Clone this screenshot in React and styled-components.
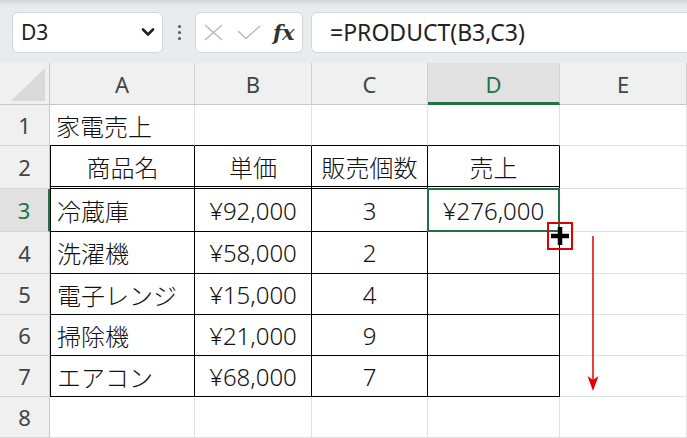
import React from 'react';
import styled, { createGlobalStyle } from 'styled-components';

const GREEN = '#217346';

const GlobalStyle = createGlobalStyle`
  html, body {
    margin: 0;
    padding: 0;
    background: #ffffff;
    overflow: hidden;
  }
  * {
    box-sizing: border-box;
  }
`;

const colWidths = [50, 145, 117, 116, 132, 127];
const rowHeights = [42, 41, 43, 43, 42, 41, 41, 41, 41];
const colNames = ['A', 'B', 'C', 'D', 'E'];

const data = [
  ['家電売上', '', '', '', ''],
  ['商品名', '単価', '販売個数', '売上', ''],
  ['冷蔵庫', '¥92,000', '3', '¥276,000', ''],
  ['洗濯機', '¥58,000', '2', '', ''],
  ['電子レンジ', '¥15,000', '4', '', ''],
  ['掃除機', '¥21,000', '9', '', ''],
  ['エアコン', '¥68,000', '7', '', ''],
  ['', '', '', '', ''],
];

export default function App() {
  return (
    <Page>
      <GlobalStyle />
      <Toolbar>
        <NameBox>
          <NameText>D3</NameText>
          <svg width="14" height="10" viewBox="0 0 14 10">
            <path d="M2 2.5 L7 7.5 L12 2.5" fill="none" stroke="#222" strokeWidth="2.6" strokeLinecap="round" strokeLinejoin="round" />
          </svg>
        </NameBox>
        <Dots>
          <span />
          <span />
          <span />
        </Dots>
        <FxBox>
          <svg width="19" height="17" viewBox="0 0 19 17">
            <path d="M1 1 L18 16 M18 1 L1 16" stroke="#b8b8b8" strokeWidth="1.4" fill="none" />
          </svg>
          <svg width="24" height="15" viewBox="0 0 24 15">
            <path d="M1 6 L9 13.5 L23 1" stroke="#b8b8b8" strokeWidth="1.4" fill="none" />
          </svg>
          <FxLabel>fx</FxLabel>
        </FxBox>
        <FormulaBox>=PRODUCT(B3,C3)</FormulaBox>
      </Toolbar>

      <Sheet>
        <Corner>
          <svg width="36" height="34" viewBox="0 0 36 34">
            <path d="M34 0 L34 33 L0 33 Z" fill="#dadada" />
          </svg>
        </Corner>
        {colNames.map((c) => (
          <ColHeader key={c} $active={c === 'D'}>{c}</ColHeader>
        ))}

        {data.map((row, r) => (
          <React.Fragment key={r}>
            <RowHeader $active={r === 2}>{r + 1}</RowHeader>
            {row.map((val, c) => {
              const inTable = r >= 1 && r <= 6 && c <= 3;
              const aboveTable = r === 0 && c <= 3;
              return (
                <Cell
                  key={c}
                  $align={c === 0 && r !== 1 ? 'flex-start' : 'center'}
                  $boxRight={inTable}
                  $boxLeft={inTable && c === 0}
                  $boxBottom={inTable || aboveTable}
                  $double={r === 1 && c <= 3}
                  $selected={r === 2 && c === 3}
                >
                  {val}
                  {r === 2 && c === 3 && (
                    <FillCursor>
                      <svg width="20" height="20" viewBox="0 0 20 20">
                        <path d="M10 1 V19 M1 10 H19" stroke="#000" strokeWidth="4.5" />
                      </svg>
                    </FillCursor>
                  )}
                </Cell>
              );
            })}
          </React.Fragment>
        ))}

        <Arrow>
          <svg width="14" height="156" viewBox="0 0 14 156">
            <line x1="7" y1="0" x2="7" y2="146" stroke="#e50000" strokeWidth="1.5" />
            <path d="M1.5 140 L7 155 L12.5 140 L7 144 Z" fill="#e50000" />
          </svg>
        </Arrow>
      </Sheet>
    </Page>
  );
}

const Page = styled.div`
  width: 687px;
  height: 438px;
  overflow: hidden;
  font-family: "Noto Sans", "Noto Sans CJK JP", sans-serif;
`;

const Toolbar = styled.div`
  height: 63px;
  display: flex;
  align-items: center;
  padding: 1px 0 0 12px;
  background: linear-gradient(#cfd3d7 0px, #e3e6ea 4px, #e9ecef 8px, #e9ecef 100%);
`;

const NameBox = styled.div`
  width: 151px;
  height: 41px;
  display: flex;
  align-items: center;
  justify-content: space-between;
  padding: 0 7px 0 8px;
  background: #ffffff;
  border: 1px solid #d4d4d4;
  border-radius: 6px;
`;

const NameText = styled.span`
  font-family: "Noto Sans", sans-serif;
  font-size: 21px;
  color: #222;
`;

const Dots = styled.div`
  width: 32px;
  display: flex;
  flex-direction: column;
  align-items: center;
  gap: 3px;
  span {
    width: 3px;
    height: 3px;
    border-radius: 50%;
    background: #555;
  }
`;

const FxBox = styled.div`
  width: 108px;
  height: 41px;
  display: flex;
  align-items: center;
  gap: 14px;
  padding-left: 8px;
  background: #ffffff;
  border: 1px solid #d4d4d4;
  border-radius: 6px;
`;

const FxLabel = styled.span`
  font-family: "DejaVu Serif", "Liberation Serif", serif;
  font-style: italic;
  font-weight: bold;
  font-size: 21px;
  color: #333;
  margin-left: -2px;
`;

const FormulaBox = styled.div`
  flex: 1;
  height: 41px;
  margin-left: 8px;
  margin-right: -10px;
  display: flex;
  align-items: center;
  padding-left: 18px;
  background: #ffffff;
  border: 1px solid #d4d4d4;
  border-radius: 6px;
  font-family: "Noto Sans", sans-serif;
  font-size: 23px;
  color: #222;
`;

const Sheet = styled.div`
  position: relative;
  display: grid;
  grid-template-columns: ${colWidths.map((w) => w + 'px').join(' ')};
  grid-template-rows: ${rowHeights.map((h) => h + 'px').join(' ')};
`;

const Corner = styled.div`
  background: #f0f0f0;
  border-right: 1px solid #c8c8c8;
  border-bottom: 1px solid #c8c8c8;
  display: flex;
  align-items: flex-end;
  justify-content: flex-end;
  padding: 0 2px 2px 0;
`;

const ColHeader = styled.div`
  display: flex;
  align-items: center;
  justify-content: center;
  font-family: "Noto Sans", sans-serif;
  font-size: 22px;
  color: ${(p) => (p.$active ? GREEN : '#444')};
  background: ${(p) => (p.$active ? '#e1e1e1' : '#f0f0f0')};
  border-right: 1px solid #d0d0d0;
  border-bottom: ${(p) => (p.$active ? `3px solid ${GREEN}` : '1px solid #c8c8c8')};
  padding-top: ${(p) => (p.$active ? '2px' : '0')};
`;

const RowHeader = styled.div`
  display: flex;
  align-items: center;
  justify-content: center;
  font-family: "Noto Sans", sans-serif;
  font-size: 22px;
  color: ${(p) => (p.$active ? GREEN : '#444')};
  background: ${(p) => (p.$active ? '#e1e1e1' : '#f0f0f0')};
  border-right: ${(p) => (p.$active ? `2px solid ${GREEN}` : '1px solid #c8c8c8')};
  border-bottom: 1px solid #d6d6d6;
`;

const Cell = styled.div`
  position: relative;
  display: flex;
  align-items: center;
  justify-content: ${(p) => p.$align};
  padding: 0 6px;
  font-size: 24px;
  font-weight: 300;
  color: #111;
  white-space: nowrap;
  border-right: 1px solid ${(p) => (p.$boxRight ? '#000' : '#e1e1e1')};
  border-bottom: ${(p) =>
    p.$double ? '3px double #000' : `1px solid ${p.$boxBottom ? '#000' : '#e1e1e1'}`};
  border-left: ${(p) => (p.$boxLeft ? '1px solid #000' : 'none')};

  ${(p) =>
    p.$selected &&
    `
    &::after {
      content: '';
      position: absolute;
      inset: -1px -1px -1px -1px;
      border: 2px solid ${GREEN};
      pointer-events: none;
    }
  `}
`;

const FillCursor = styled.div`
  position: absolute;
  left: 119px;
  top: 33px;
  width: 26px;
  height: 28px;
  border: 2px solid #e00000;
  display: flex;
  align-items: center;
  justify-content: center;
  z-index: 2;
`;

const Arrow = styled.div`
  position: absolute;
  left: 586px;
  top: 173px;
  line-height: 0;
`;
